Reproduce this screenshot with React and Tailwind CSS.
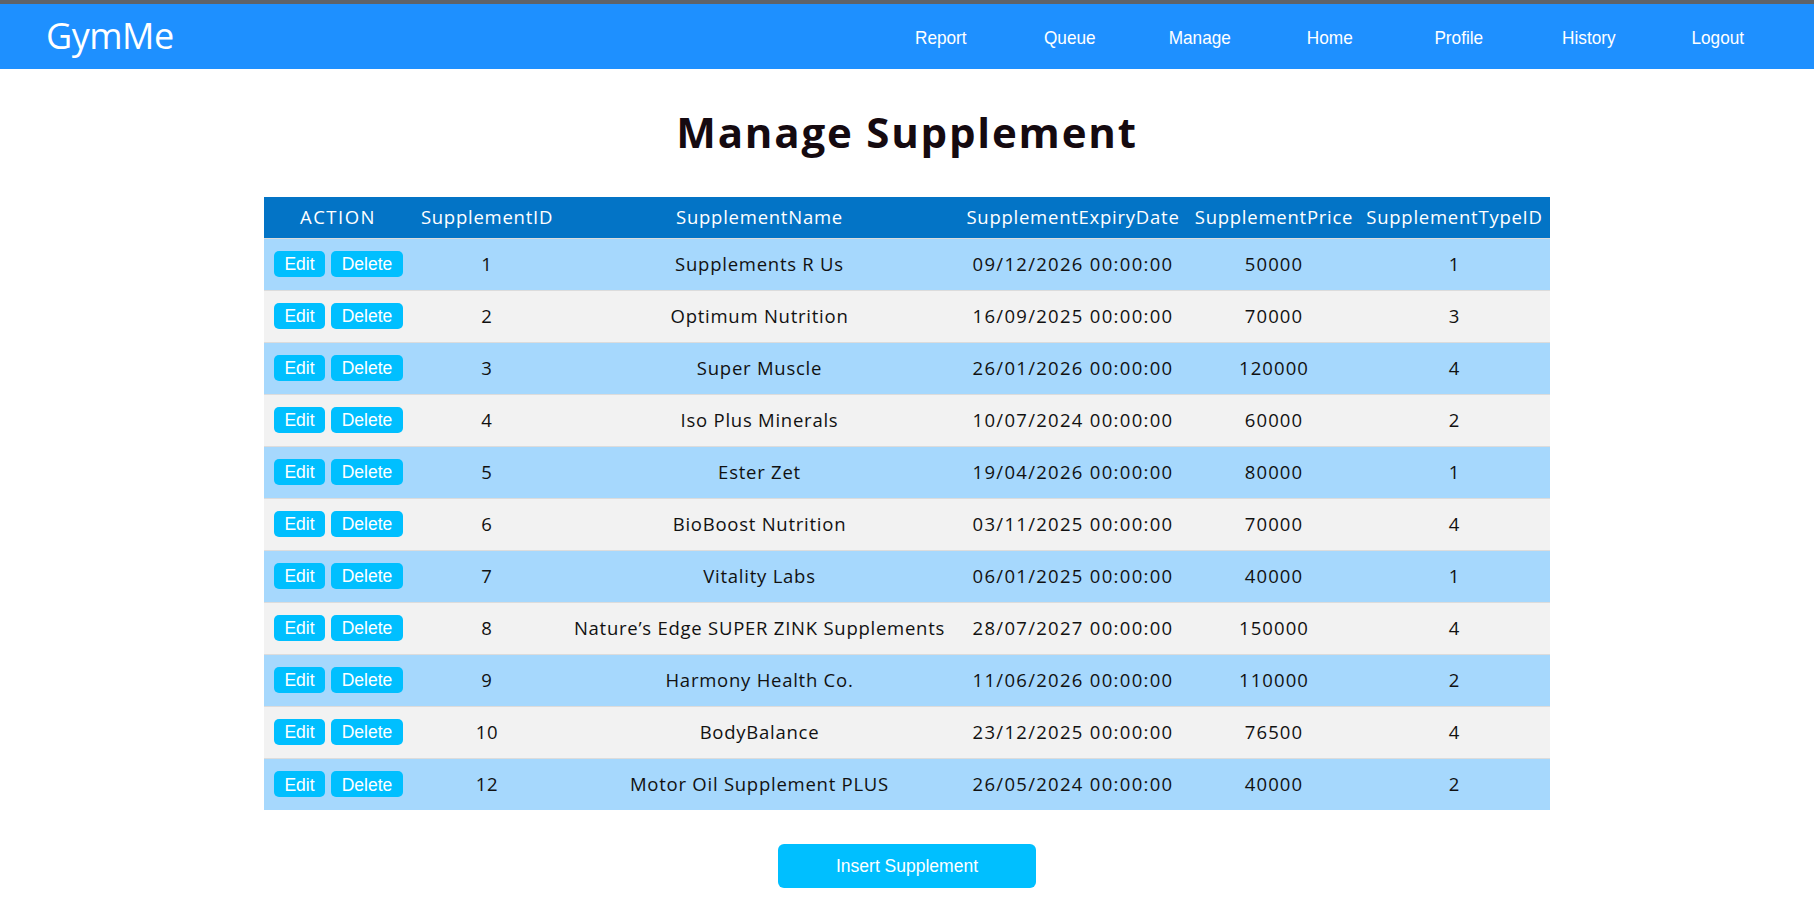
import React from "react";

const rows = [
  [1, "Supplements R Us", "09/12/2026 00:00:00", "50000", 1],
  [2, "Optimum Nutrition", "16/09/2025 00:00:00", "70000", 3],
  [3, "Super Muscle", "26/01/2026 00:00:00", "120000", 4],
  [4, "Iso Plus Minerals", "10/07/2024 00:00:00", "60000", 2],
  [5, "Ester Zet", "19/04/2026 00:00:00", "80000", 1],
  [6, "BioBoost Nutrition", "03/11/2025 00:00:00", "70000", 4],
  [7, "Vitality Labs", "06/01/2025 00:00:00", "40000", 1],
  [8, "Nature\u2019s Edge SUPER ZINK Supplements", "28/07/2027 00:00:00", "150000", 4],
  [9, "Harmony Health Co.", "11/06/2026 00:00:00", "110000", 2],
  [10, "BodyBalance", "23/12/2025 00:00:00", "76500", 4],
  [12, "Motor Oil Supplement PLUS", "26/05/2024 00:00:00", "40000", 2],
];

const links = ["Report", "Queue", "Manage", "Home", "Profile", "History", "Logout"];

export default function App() {
  return (
    <div className="min-h-[909px] bg-white font-['Open_Sans',sans-serif]">
      <div className="h-[4px] bg-[#5f6368]" />
      <nav className="h-[65px] bg-[#1e90ff] flex items-center justify-between pl-[46px] pr-[31px]">
        <div className="text-white text-[36px] leading-none tracking-[-0.5px] pb-[2px]">GymMe</div>
        <ul className="flex pt-[2px]">
          {links.map((l) => (
            <li key={l} className="w-[129.6px] text-center text-white text-[18.5px] font-['Liberation_Sans',sans-serif] scale-x-[0.93]">
              {l}
            </li>
          ))}
        </ul>
      </nav>
      <h1 className="text-center text-[42px] font-bold text-[#150a10] leading-none pt-[42px] pb-[44px] tracking-[1.8px]">
        Manage Supplement
      </h1>
      <div className="flex justify-center">
        <table className="table-fixed w-[1286px] border-collapse text-[18.5px] tracking-[0.75px]">
          <colgroup>
            <col className="w-[148px]" />
            <col className="w-[150px]" />
            <col className="w-[395px]" />
            <col className="w-[232px]" />
            <col className="w-[170px]" />
            <col className="w-[191px]" />
          </colgroup>
          <thead>
            <tr className="bg-[#0374c6] text-white h-[41px]">
              <th className="font-normal tracking-[1.5px]">ACTION</th>
              <th className="font-normal">SupplementID</th>
              <th className="font-normal">SupplementName</th>
              <th className="font-normal">SupplementExpiryDate</th>
              <th className="font-normal">SupplementPrice</th>
              <th className="font-normal">SupplementTypeID</th>
            </tr>
          </thead>
          <tbody>
            {rows.map((r, i) => (
              <tr
                key={r[0]}
                className={(i % 2 === 0 ? "bg-[#a6d8fd]" : "bg-[#f2f2f2]") + " h-[52px] border-t border-[#dcdcdc] text-[#111]"}
              >
                <td className="pl-[10px]">
                  <div className="flex gap-[6px] font-['Liberation_Sans',sans-serif] text-[17.5px] tracking-normal text-white">
                    <button className="w-[51px] h-[26px] rounded-[5px] bg-[#00bfff] leading-none pt-[2px]">Edit</button>
                    <button className="w-[72px] h-[26px] rounded-[5px] bg-[#00bfff] leading-none pt-[2px]">Delete</button>
                  </div>
                </td>
                <td className="text-center">{r[0]}</td>
                <td className="text-center">{r[1]}</td>
                <td className="text-center tracking-[1.3px]">{r[2]}</td>
                <td className="text-center tracking-[1.1px]">{r[3]}</td>
                <td className="text-center">{r[4]}</td>
              </tr>
            ))}
          </tbody>
        </table>
      </div>
      <div className="flex justify-center pt-[34px]">
        <button className="w-[258px] h-[44px] rounded-[6px] bg-[#00bfff] text-white text-[17.5px] font-['Liberation_Sans',sans-serif]">
          Insert Supplement
        </button>
      </div>
    </div>
  );
}
